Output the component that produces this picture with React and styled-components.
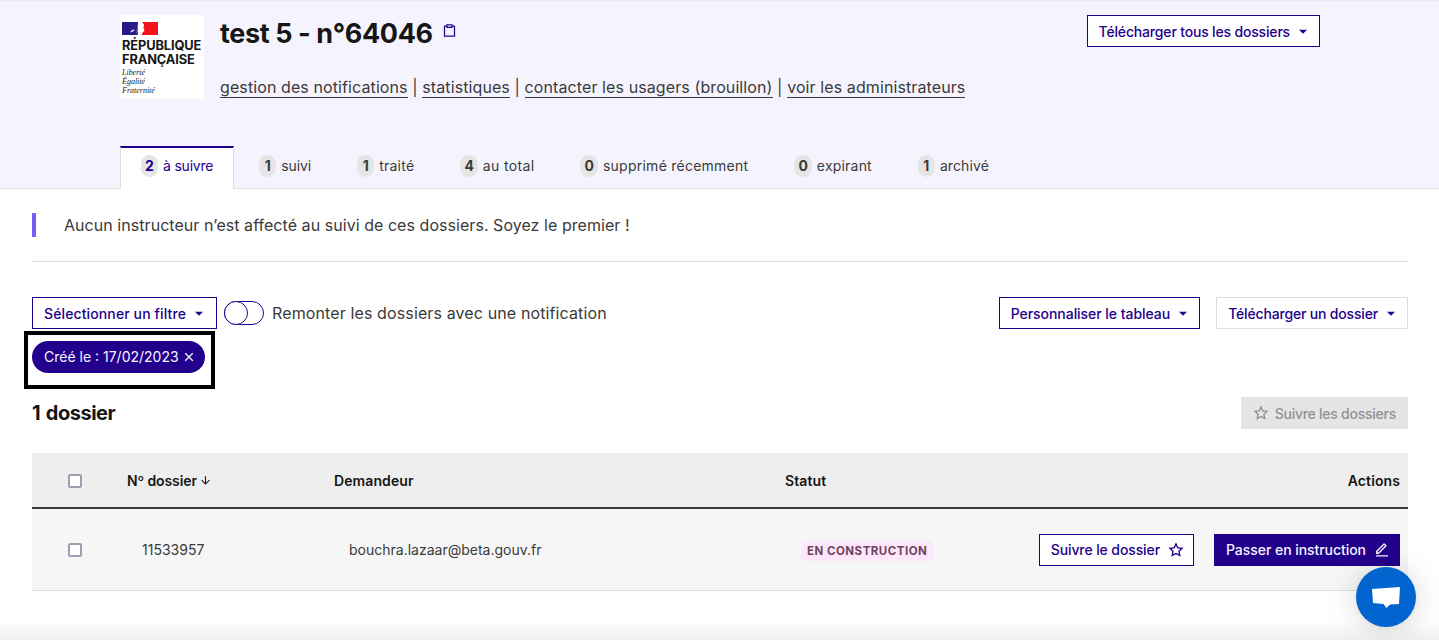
import React from 'react'
import styled, { createGlobalStyle } from 'styled-components'
import {
  RiArrowDownLine,
  RiArrowDownSFill,
  RiClipboardLine,
  RiCloseLine,
  RiEditLine,
  RiStarLine,
} from 'react-icons/ri'

const PRIMARY = '#23008c'

const GlobalStyle = createGlobalStyle`
  html, body {
    margin: 0;
    height: 640px;
    overflow: hidden;
    background: #fff;
    font-family: Inter, "Noto Sans", "Liberation Sans", sans-serif;
    color: #3a3a3a;
  }
  * { box-sizing: border-box; }
`

const Header = styled.header`
  height: 189px;
  padding: 15px 119px 0 120px;
  background: #f5f4fe;
  border-bottom: 1px solid #ddd;
  box-shadow: inset 0 2px 2px -1px rgba(0, 0, 0, 0.06);
`
const TopRow = styled.div`
  display: flex;
  align-items: flex-start;
  height: 84px;
`
const Logo = styled.div`
  width: 84px;
  height: 84px;
  padding: 7px 0 0 2px;
  background: #fff;
  flex: none;
`
const LogoName = styled.div`
  margin-top: 4px;
  font-size: 12.8px;
  line-height: 13.5px;
  font-weight: 700;
  color: #161616;
  letter-spacing: -0.1px;
`
const Motto = styled.div`
  margin-top: 2px;
  font-family: "Liberation Serif", serif;
  font-style: italic;
  font-size: 8px;
  line-height: 9px;
  color: #222;
`
const Info = styled.div`
  flex: 1;
  margin-left: 16px;
`
const TitleRow = styled.div`
  display: flex;
  align-items: flex-start;
  gap: 9px;
`
const Title = styled.h1`
  margin: 0;
  font-size: 27px;
  line-height: 38px;
  font-weight: 700;
  letter-spacing: -0.38px;
  color: #161616;
`
const CopyIcon = styled(RiClipboardLine)`
  margin-top: 8px;
  font-size: 15px;
  color: ${PRIMARY};
`
const Links = styled.div`
  margin-top: 22px;
  font-size: 16px;
  line-height: 24px;
  letter-spacing: 0.1px;
  color: #3a3a3a;
`
const HeaderLink = styled.a`
  color: #3a3a3a;
  text-decoration: none;
  border-bottom: 1px solid #3a3a3a;
`
const Tabs = styled.nav`
  display: flex;
  gap: 4px;
  margin-top: 47px;
`
const Tab = styled.div`
  display: flex;
  align-items: center;
  gap: 5px;
  height: 43px;
  padding: 0 20px 6px;
  font-size: 14px;
  letter-spacing: ${p => p.$track}px;
  color: ${p => (p.$active ? PRIMARY : '#3a3a3a')};
  background: ${p => (p.$active ? '#fff' : 'transparent')};
  border-top: 2px solid ${p => (p.$active ? PRIMARY : 'transparent')};
  border-left: 1px solid ${p => (p.$active ? '#ddd' : 'transparent')};
  border-right: 1px solid ${p => (p.$active ? '#ddd' : 'transparent')};
`
const Count = styled.span`
  display: flex;
  align-items: center;
  justify-content: center;
  min-width: 17px;
  height: 22px;
  padding: 0 4px;
  border-radius: 10px;
  background: #e5e5e5;
  font-size: 14px;
  font-weight: 700;
  letter-spacing: 0;
`
const Main = styled.main`
  padding: 24px 31px 0 32px;
`
const Notice = styled.div`
  height: 24px;
  padding-left: 28px;
  border-left: 4px solid #7a5cf0;
  font-size: 16px;
  line-height: 24px;
  letter-spacing: 0.05px;
  color: #3a3a3a;
`
const Divider = styled.hr`
  margin: 24px 0 35px;
  border: 0;
  border-top: 1px solid #ddd;
`
const Toolbar = styled.div`
  display: flex;
  align-items: center;
  justify-content: space-between;
`
const Group = styled.div`
  display: flex;
  align-items: center;
  gap: ${p => p.$gap || 8}px;
`
const Button = styled.button`
  display: inline-flex;
  align-items: center;
  gap: ${p => p.$gap || 5}px;
  height: 32px;
  padding: 0 ${p => p.$padRight || 8}px 0 ${p => p.$padLeft || 11}px;
  font-family: inherit;
  font-size: 14px;
  font-weight: 500;
  letter-spacing: ${p => p.$track ?? -0.04}px;
  white-space: nowrap;
  color: ${p => (p.$solid ? '#f5f5fe' : PRIMARY)};
  background: ${p => (p.$solid ? PRIMARY : '#fff')};
  border: 1px solid ${p => (p.$plain ? '#ddd' : PRIMARY)};
  svg { font-size: 16px; flex: none; }
`
const DisabledButton = styled(Button)`
  color: #929292;
  background: #e5e5e5;
  border-color: #e5e5e5;
`
const ToggleTrack = styled.span`
  position: relative;
  display: block;
  width: 40px;
  height: 24px;
  border: 1px solid ${PRIMARY};
  border-radius: 12px;
  background: #fff;
`
const ToggleKnob = styled.span`
  position: absolute;
  left: -1px;
  top: -1px;
  width: 24px;
  height: 24px;
  border: 1px solid ${PRIMARY};
  border-radius: 50%;
  background: #fff;
`
const ToggleLabel = styled.span`
  margin-left: 1px;
  font-size: 16px;
  letter-spacing: 0.12px;
  color: #3a3a3a;
`
const TagBox = styled.div`
  display: inline-block;
  margin: 2px 0 0 -8px;
  padding: 6px 6px 12px 4px;
  border: 4px solid #000;
  line-height: 0;
`
const Tag = styled.span`
  display: inline-flex;
  align-items: center;
  gap: 2px;
  height: 32px;
  padding: 0 8px 0 12px;
  border-radius: 16px;
  background: ${PRIMARY};
  color: #f5f5fe;
  font-size: 14px;
  line-height: 32px;
  svg { font-size: 16px; }
`
const CountRow = styled.div`
  display: flex;
  align-items: center;
  justify-content: space-between;
  margin-top: 8px;
`
const CountTitle = styled.h2`
  margin: 0;
  font-size: 20px;
  line-height: 32px;
  font-weight: 700;
  letter-spacing: -0.5px;
  word-spacing: 1.5px;
  color: #161616;
`
const Table = styled.div`
  margin-top: 24px;
`
const GridRow = styled.div`
  display: grid;
  grid-template-columns: 95px 207px 451px 1fr;
  align-items: center;
`
const HeadRow = styled(GridRow)`
  height: 56px;
  background: #eee;
  border-bottom: 2px solid #3a3a3a;
  font-size: 14px;
  font-weight: 600;
  letter-spacing: 0.1px;
  color: #161616;
`
const BodyRow = styled(GridRow)`
  height: 82px;
  background: #f6f6f6;
  border-bottom: 1px solid #ddd;
  font-size: 14px;
  color: #3a3a3a;
`
const CheckCell = styled.div`
  padding: ${p => (p.$head ? 2 : 0)}px 0 0 36px;
  display: flex;
`
const Check = styled.span`
  display: block;
  width: 14px;
  height: 14px;
  border: 2px solid #9f9db0;
  border-radius: 2px;
  background: #fff;
`
const HeadLabel = styled.div`
  display: flex;
  align-items: center;
  gap: 2px;
  letter-spacing: -0.1px;
  svg { font-size: 13px; }
`
const Cell = styled.div`
  padding-left: 15px;
`
const StatusActions = styled.div`
  display: flex;
  align-items: center;
  justify-content: space-between;
  padding: 0 8px 0 16px;
`
const HeadActions = styled.div`
  display: flex;
  justify-content: space-between;
  padding-right: 8px;
`
const Badge = styled.span`
  margin-top: 2px;
  padding: 0 6px;
  height: 20px;
  line-height: 20px;
  border-radius: 4px;
  background: #fee7fc;
  color: #6e445a;
  font-size: 11.5px;
  font-weight: 700;
  letter-spacing: 0.5px;
  text-transform: uppercase;
`
const ChatBubble = styled.div`
  position: fixed;
  left: 1356px;
  top: 567px;
  width: 60px;
  height: 60px;
  display: flex;
  align-items: center;
  justify-content: center;
  border-radius: 50%;
  background: #0164cf;
  box-shadow: 0 1px 6px rgba(0, 0, 0, 0.06), 0 2px 32px rgba(0, 0, 0, 0.16);
`
const BottomFade = styled.div`
  position: fixed;
  left: 0;
  right: 0;
  bottom: 0;
  height: 20px;
  background: linear-gradient(rgba(0, 0, 0, 0), rgba(0, 0, 0, 0.06));
`

const FlagMark = () => (
  <svg width="36" height="13" viewBox="0 0 36 13" style={{ display: 'block' }}>
    <rect width="36" height="13" fill="#fff" />
    <rect width="16" height="13" fill="#2a1a8c" />
    <path d="M16 0h3l-1.500 3.500-1 2-2 2.500 2 1.500-2 1 1 2.500h-.5z" fill="#fff" />
    <path d="M9 8.500l3-1.200 .8 1-2.500 1.700-2 .4z" fill="#c9c6e6" />
    <path d="M20 0h16v13H19.500l1.500-3 1.500-1-1-3 .5-3.500z" fill="#f4121d" />
  </svg>
)

const ChatIcon = () => (
  <svg width="30" height="26" viewBox="0 0 30 26">
    <path d="M1 5l28-2-1 17-9 .500-3.500 3.500-3-4L2 19z" fill="#fff" />
  </svg>
)

const tabs = [
  { count: '2', label: 'à suivre', track: -0.2, active: true },
  { count: '1', label: 'suivi', track: -0.1 },
  { count: '1', label: 'traité', track: 0.25 },
  { count: '4', label: 'au total', track: 0.35 },
  { count: '0', label: 'supprimé récemment', track: 0.25 },
  { count: '0', label: 'expirant', track: 0.2 },
  { count: '1', label: 'archivé', track: 0.1 },
]

export default function App() {
  return (
    <>
      <GlobalStyle />
      <Header>
        <TopRow>
          <Logo>
            <FlagMark />
            <LogoName>RÉPUBLIQUE<br />FRANÇAISE</LogoName>
            <Motto>Liberté<br />Égalité<br />Fraternité</Motto>
          </Logo>
          <Info>
            <TitleRow>
              <Title>test 5 - n°64046</Title>
              <CopyIcon />
            </TitleRow>
            <Links>
              <HeaderLink>gestion des notifications</HeaderLink> | <HeaderLink>statistiques</HeaderLink> | <HeaderLink>contacter les usagers (brouillon)</HeaderLink> | <HeaderLink>voir les administrateurs</HeaderLink>
            </Links>
          </Info>
          <Button $track={-0.17}>Télécharger tous les dossiers <RiArrowDownSFill /></Button>
        </TopRow>
        <Tabs>
          {tabs.map(t => (
            <Tab key={t.label} $active={t.active} $track={t.track}>
              <Count>{t.count}</Count>
              {t.label}
            </Tab>
          ))}
        </Tabs>
      </Header>
      <Main>
        <Notice>Aucun instructeur n’est affecté au suivi de ces dossiers. Soyez le premier !</Notice>
        <Divider />
        <Toolbar>
          <Group $gap={7}>
            <Button $track={0.12} $padRight={9}>Sélectionner un filtre <RiArrowDownSFill /></Button>
            <ToggleTrack><ToggleKnob /></ToggleTrack>
            <ToggleLabel>Remonter les dossiers avec une notification</ToggleLabel>
          </Group>
          <Group $gap={16}>
            <Button>Personnaliser le tableau <RiArrowDownSFill /></Button>
            <Button $plain $track={-0.17}>Télécharger un dossier <RiArrowDownSFill /></Button>
          </Group>
        </Toolbar>
        <TagBox>
          <Tag>Créé le : 17/02/2023 <RiCloseLine /></Tag>
        </TagBox>
        <CountRow>
          <CountTitle>1 dossier</CountTitle>
          <DisabledButton $gap={6} $padRight={11} $track={-0.25}><RiStarLine />Suivre les dossiers</DisabledButton>
        </CountRow>
        <Table>
          <HeadRow>
            <CheckCell $head><Check /></CheckCell>
            <HeadLabel>Nº dossier <RiArrowDownLine /></HeadLabel>
            <div>Demandeur</div>
            <HeadActions><span>Statut</span><span>Actions</span></HeadActions>
          </HeadRow>
          <BodyRow>
            <CheckCell><Check /></CheckCell>
            <Cell>11533957</Cell>
            <Cell>bouchra.lazaar@beta.gouv.fr</Cell>
            <StatusActions>
              <Badge>En construction</Badge>
              <Group $gap={20}>
                <Button $gap={8} $padRight={9} $track={-0.1}>Suivre le dossier <RiStarLine /></Button>
                <Button $solid $gap={8} $padRight={9} $track={-0.05}>Passer en instruction <RiEditLine /></Button>
              </Group>
            </StatusActions>
          </BodyRow>
        </Table>
      </Main>
      <BottomFade />
      <ChatBubble><ChatIcon /></ChatBubble>
    </>
  )
}
